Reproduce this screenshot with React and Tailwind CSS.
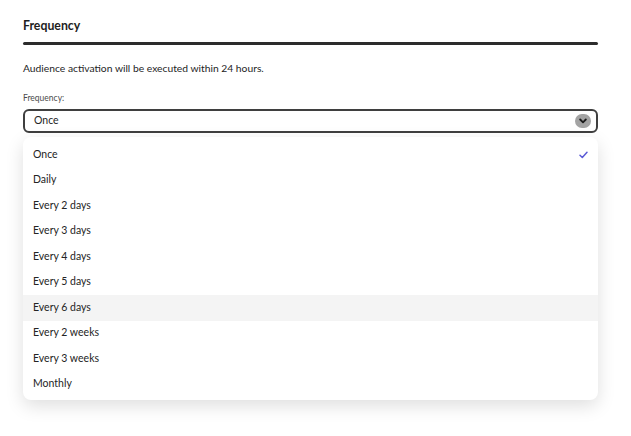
import React, { useState } from 'react'

const options = [
  'Once',
  'Daily',
  'Every 2 days',
  'Every 3 days',
  'Every 4 days',
  'Every 5 days',
  'Every 6 days',
  'Every 2 weeks',
  'Every 3 weeks',
  'Monthly',
]

const App = () => {
  const [selected, setSelected] = useState('Once')
  const [hovered, setHovered] = useState('Every 6 days')

  return (
    <div className="w-[631px] h-[436px] bg-white text-[#242424] font-['Lato',sans-serif] overflow-hidden">
      <div className="ml-[23px] pt-[19px] w-[575px]">
        <h2 className="text-[12.3px] font-bold leading-[14px] text-[#1e1e1e]">Frequency</h2>
        <div className="mt-[9px] h-[3px] bg-[#2c2c2c] rounded-full" />

        <p className="mt-[17px] text-[10.3px] leading-[13px]">Audience activation will be executed within 24 hours.</p>

        <label className="block mt-[18px] text-[8.5px] leading-[10px] text-[#4b4b4b]">Frequency:</label>

        <div className="relative mt-[6px]">
          <button className="w-full h-[24px] flex items-center justify-between pl-[9px] pr-[5px] border-2 border-[#3f3f3f] rounded-[6px] bg-white text-[10.5px]">
            <span>{selected}</span>
            <span className="w-[16px] h-[14px] rounded-full bg-[#a3a3a3] flex items-center justify-center">
              <svg width="8" height="6" viewBox="0 0 8 6" fill="none">
                <path d="M1.2 1.5 L4 4.3 L6.8 1.5" stroke="#1a1a1a" strokeWidth="1.8" strokeLinecap="round" strokeLinejoin="round" />
              </svg>
            </span>
          </button>

          {/* Dropdown */}
          <div className="absolute left-0 right-0 top-[28px] bg-white rounded-[8px] shadow-[0_6px_18px_rgba(0,0,0,0.13)] pt-[5px] pb-[3px]">
            {options.map((opt) => (
              <div
                key={opt}
                onClick={() => setSelected(opt)}
                onMouseEnter={() => setHovered(opt)}
                className={`h-[25.5px] flex items-center justify-between pl-[10px] pr-[10px] text-[10.5px] cursor-pointer ${
                  hovered === opt ? 'bg-[#f4f4f4]' : ''
                }`}
              >
                <span>{opt}</span>
                {selected === opt && (
                  <svg width="9" height="8" viewBox="0 0 9 8" fill="none">
                    <path d="M1 4.3 L3.3 6.5 L8 1.2" stroke="#5b5bd6" strokeWidth="1.5" strokeLinecap="round" strokeLinejoin="round" />
                  </svg>
                )}
              </div>
            ))}
          </div>
        </div>
      </div>
    </div>
  )
}

export default App
